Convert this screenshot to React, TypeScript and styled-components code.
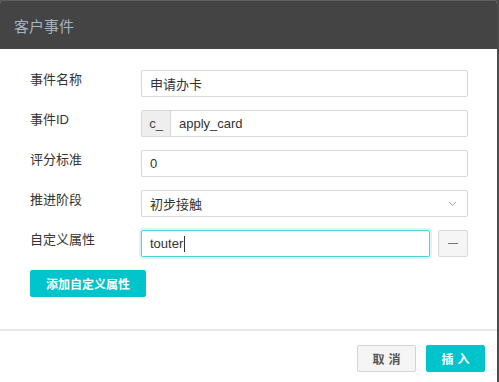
import React from 'react';
import styled, { createGlobalStyle } from 'styled-components';

const GlobalStyle = createGlobalStyle`
  html, body {
    margin: 0;
    padding: 0;
    background: #4a4a4a;
  }
  body {
    font-family: "Liberation Sans", "Noto Sans CJK SC", sans-serif;
  }
  * {
    box-sizing: border-box;
  }
`;

const Modal = styled.div`
  width: 497px;
  height: 382px;
  background: #fff;
  border-top-right-radius: 4px;
  border-top-left-radius: 4px;
  overflow: hidden;
  display: flex;
  flex-direction: column;
`;

const Header = styled.div`
  height: 49px;
  background: #444;
  border-top: 1px solid #5e5e5e;
  display: flex;
  align-items: center;
  padding-left: 14px;
  color: #a3b3c2;
  font-size: 15px;
  font-family: "Noto Sans CJK SC", sans-serif;
`;

const Body = styled.div`
  padding: 21px 29px 32px 30px;
  display: flex;
  flex-direction: column;
  gap: 13px;
  border-bottom: 2px solid #e6e6e6;
`;

const Row = styled.div`
  display: flex;
  align-items: flex-start;
`;

const Label = styled.div`
  width: 111px;
  flex-shrink: 0;
  font-size: 13px;
  color: #333;
  line-height: 18px;
  padding-top: 1px;
  font-family: "Liberation Sans", "Noto Sans CJK SC", sans-serif;
`;

const Field = styled.div`
  flex: 1;
  display: flex;
  gap: 8px;
`;

const Input = styled.div<{ $focused?: boolean }>`
  flex: 1;
  height: 27px;
  border: 1px solid ${p => (p.$focused ? '#4fd3d8' : '#d9d9d9')};
  border-radius: 2px;
  box-shadow: ${p => (p.$focused ? '0 0 0 2px rgba(0, 196, 204, 0.15)' : 'none')};
  display: flex;
  align-items: center;
  padding: 0 8px;
  font-size: 13px;
  color: #333;
  background: #fff;
`;

const Caret = styled.span`
  display: inline-block;
  width: 1px;
  height: 16px;
  background: #333;
  margin-left: 1px;
`;

const Group = styled.div`
  flex: 1;
  height: 27px;
  display: flex;
  border: 1px solid #d9d9d9;
  border-radius: 2px;
  overflow: hidden;
`;

const Addon = styled.div`
  width: 29px;
  background: #eee;
  border-right: 1px solid #d9d9d9;
  display: flex;
  align-items: center;
  justify-content: center;
  font-size: 13px;
  color: #444;
`;

const GroupText = styled.div`
  flex: 1;
  display: flex;
  align-items: center;
  padding: 0 8px;
  font-size: 13px;
  color: #333;
`;

const Select = styled(Input)`
  justify-content: space-between;
  padding-right: 10px;
`;

const IconButton = styled.div`
  width: 30px;
  height: 27px;
  border: 1px solid #d9d9d9;
  border-radius: 2px;
  background: #f5f5f5;
  display: flex;
  align-items: center;
  justify-content: center;
`;

const Button = styled.div<{ $primary?: boolean }>`
  height: 27px;
  padding: 0 15px;
  border-radius: 2px;
  display: inline-flex;
  align-items: center;
  justify-content: center;
  font-size: 12px;
  font-weight: bold;
  background: ${p => (p.$primary ? '#00c4cc' : '#f5f5f5')};
  color: ${p => (p.$primary ? '#fff' : '#555')};
  border: 1px solid ${p => (p.$primary ? '#00c4cc' : '#d4d4d4')};
  font-family: "Noto Sans CJK SC", sans-serif;
`;

const AddRow = styled.div`
  display: flex;
`;

const Footer = styled.div`
  display: flex;
  justify-content: flex-end;
  gap: 10px;
  padding: 14px 12px 0 0;
`;

const FooterButton = styled(Button)`
  width: 59px;
  padding: 0 0 0 4px;
  letter-spacing: 4px;
`;

const App: React.FC = () => (
  <>
    <GlobalStyle />
    <Modal>
      <Header>客户事件</Header>
      <Body>
        <Row>
          <Label>事件名称</Label>
          <Field>
            <Input>申请办卡</Input>
          </Field>
        </Row>
        <Row>
          <Label>事件ID</Label>
          <Field>
            <Group>
              <Addon>c_</Addon>
              <GroupText>apply_card</GroupText>
            </Group>
          </Field>
        </Row>
        <Row>
          <Label>评分标准</Label>
          <Field>
            <Input>0</Input>
          </Field>
        </Row>
        <Row>
          <Label>推进阶段</Label>
          <Field>
            <Select>
              <span>初步接触</span>
              <svg width="9" height="6" viewBox="0 0 9 6">
                <path d="M1 1l3.5 3.5L8 1" fill="none" stroke="#aaa" strokeWidth="1" />
              </svg>
            </Select>
          </Field>
        </Row>
        <Row>
          <Label>自定义属性</Label>
          <Field>
            <Input $focused>
              touter<Caret />
            </Input>
            <IconButton>
              <svg width="10" height="2" viewBox="0 0 10 2">
                <rect width="10" height="1" fill="#777" />
              </svg>
            </IconButton>
          </Field>
        </Row>
        <AddRow>
          <Button $primary>添加自定义属性</Button>
        </AddRow>
      </Body>
      <Footer>
        <FooterButton>取消</FooterButton>
        <FooterButton $primary>插入</FooterButton>
      </Footer>
    </Modal>
  </>
);

export default App;
